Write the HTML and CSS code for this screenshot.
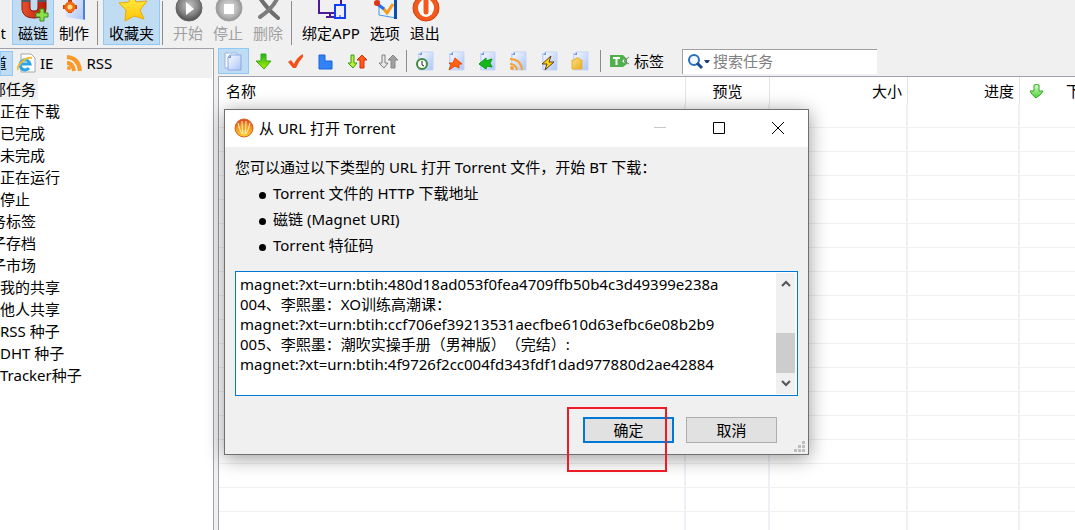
FILE: index.html
```html
<!DOCTYPE html>
<html lang="zh-CN">
<head>
    <meta charset="UTF-8">
    <meta name="viewport" content="width=device-width, initial-scale=1.0">
    <title>BitComet</title>
    <link rel="stylesheet" href="styles.css">
</head>
<body>

    <!-- shared icon parts -->
    <svg class="defs" width="0" height="0">
        <defs>
            <linearGradient id="paper" x1="0" y1="0" x2="1" y2="1">
                <stop offset="0" stop-color="#fafcff"/>
                <stop offset="1" stop-color="#abc4f8"/>
            </linearGradient>
            <linearGradient id="red" x1="0" y1="0" x2="1" y2="0">
                <stop offset="0" stop-color="#e8502c"/>
                <stop offset="1" stop-color="#b41a08"/>
            </linearGradient>
            <linearGradient id="gold" x1="0" y1="0" x2="0" y2="1">
                <stop offset="0" stop-color="#fff45a"/>
                <stop offset="1" stop-color="#ffc400"/>
            </linearGradient>
            <linearGradient id="green" x1="0" y1="0" x2="0" y2="1">
                <stop offset="0" stop-color="#1fb01f"/>
                <stop offset="1" stop-color="#b4f000"/>
            </linearGradient>
            <linearGradient id="mint" x1="0" y1="0" x2="0" y2="1">
                <stop offset="0" stop-color="#e0ffd0"/>
                <stop offset="1" stop-color="#48d030"/>
            </linearGradient>
            <linearGradient id="folder" x1="0" y1="0" x2="1" y2="1">
                <stop offset="0" stop-color="#ffe27a"/>
                <stop offset="1" stop-color="#e6ac28"/>
            </linearGradient>
            <radialGradient id="dark" cx="0.5" cy="0.4" r="0.6">
                <stop offset="0" stop-color="#c4c4c4"/>
                <stop offset="0.6" stop-color="#858585"/>
                <stop offset="1" stop-color="#4c4c4c"/>
            </radialGradient>
            <radialGradient id="light" cx="0.5" cy="0.5" r="0.55">
                <stop offset="0" stop-color="#e0e0e0"/>
                <stop offset="0.6" stop-color="#b8b8b8"/>
                <stop offset="1" stop-color="#888"/>
            </radialGradient>
            <radialGradient id="comet" cx="0.5" cy="0.9" r="0.9">
                <stop offset="0" stop-color="#ffd52a"/>
                <stop offset="0.6" stop-color="#f59a20"/>
                <stop offset="1" stop-color="#d8401c"/>
            </radialGradient>
            <g id="page">
                <path d="M3 2h3v17H3z" fill="#c3d2f6"/>
                <path d="M6 1h12v18H4V3z" fill="url(#paper)" stroke="#c4d4f8"/>
                <path d="M4 4l3-3v3z" fill="#6a92e4"/>
            </g>
        </defs>
    </svg>

    <div class="toolbar">
        <button class="tool cut"><span>打开Torrent</span></button>
        <button class="tool active">
            <svg width="32" height="32" viewBox="0 0 32 32">
                <path d="M5 0v18c0 7 5 10 12 10s12-3 12-10V0h-8v17c0 3-1 4-4 4s-4-1-4-4V0z" fill="url(#red)" stroke="#8c1808"/>
                <path d="M5 5h8v7H5zM21 5h8v7h-8z" fill="#50586c"/>
                <path d="M23 19h4v4h4v4h-4v4h-4v-4h-4v-4h4z" fill="#8ee04c" stroke="#38901c"/>
            </svg>
            <span>磁链</span>
        </button>
        <button class="tool">
            <svg width="32" height="32" viewBox="0 0 32 32">
                <path d="M7 0h20v30L8 27z" fill="url(#paper)"/>
                <path d="M25 0h2v30l-2-1z" fill="#4c7fda"/>
                <path d="M12 10v13M5 17h14" stroke="#c8400c" stroke-width="4"/>
                <circle cx="12" cy="17" r="4" fill="#ffe080" stroke="#f06a18" stroke-width="3"/>
            </svg>
            <span>制作</span>
        </button>
        <i class="sep"></i>
        <button class="tool active">
            <svg width="32" height="32" viewBox="0 0 32 32">
                <path d="M15 1l5 11 11-1-7 9 4 9-10-3-9 5 1-11-7-7 10-1z" fill="url(#gold)" stroke="#eea900" stroke-linejoin="round"/>
            </svg>
            <span>收藏夹</span>
        </button>
        <i class="sep tight"></i>
        <button class="tool" disabled>
            <svg width="32" height="32" viewBox="0 0 32 32">
                <circle cx="17" cy="18" r="13" fill="url(#dark)" stroke="#666"/>
                <path d="M14 12l8 7-8 6z" fill="#fff"/>
            </svg>
            <span>开始</span>
        </button>
        <button class="tool" disabled>
            <svg width="32" height="32" viewBox="0 0 32 32">
                <circle cx="17" cy="18" r="13" fill="url(#light)" stroke="#a0a0a0"/>
                <path d="M12 14h10v10H12z" fill="#fff"/>
            </svg>
            <span>停止</span>
        </button>
        <button class="tool" disabled>
            <svg width="32" height="32" viewBox="0 0 32 32">
                <path d="M8 8q8 12 18 20" fill="none" stroke="#6e6e6e" stroke-width="4" stroke-linecap="round"/>
                <path d="M25 9q-5 10-17 18" fill="none" stroke="#7c7c7c" stroke-width="4" stroke-linecap="round"/>
            </svg>
            <span>删除</span>
        </button>
        <i class="sep"></i>
        <button class="tool">
            <svg width="32" height="32" viewBox="0 0 32 32">
                <path d="M4 6h22v17H4zM15 23v4M11 27h8" fill="none" stroke="#4c1a96" stroke-width="2"/>
                <path d="M20 15h10v13H20z" fill="#f0f0f0" stroke="#1040ff" stroke-width="2"/>
                <path d="M24 26h2" stroke="#1040ff"/>
            </svg>
            <span>绑定APP</span>
        </button>
        <button class="tool">
            <svg width="32" height="32" viewBox="0 0 32 32">
                <path d="M10 3l17 2v23l-17-3z" fill="#eaf4ff" stroke="#4296ee"/>
                <path d="M25 4h3v25h-3z" fill="#104da4"/>
                <path d="M14 18l4 5 6-9" fill="none" stroke="#f79a18" stroke-width="3"/>
                <path d="M7 13l8 6" stroke="#2a6ce8" stroke-width="3"/>
                <circle cx="8" cy="13" r="3" fill="#e83010"/>
            </svg>
            <span>选项</span>
        </button>
        <button class="tool">
            <svg width="32" height="32" viewBox="0 0 32 32">
                <circle cx="17" cy="18" r="13" fill="#f2591c" stroke="#d83c08"/>
                <ellipse cx="17" cy="18" rx="8" ry="9" fill="#fff"/>
                <path d="M17 11v11" stroke="#f2591c" stroke-width="5" stroke-linecap="round"/>
            </svg>
            <span>退出</span>
        </button>
    </div>

    <div class="main">
        <div class="sidebar">
            <div class="tabs">
                <button class="tab cut active"><span>频道</span></button>
                <button class="tab">
                    <svg width="20" height="20" viewBox="0 0 20 20">
                        <path d="M4 1h10l4 4v14H4z" fill="#fff" stroke="#a8a8a8"/>
                        <path d="M4 11h9a5 5 0 1 0-1 4" fill="none" stroke="#2da5e4" stroke-width="3"/>
                        <path d="M1 17C-1 13 9 3 15 5" fill="none" stroke="#f5bd28" stroke-width="2"/>
                    </svg>
                    <span>IE</span>
                </button>
                <button class="tab">
                    <svg width="18" height="18" viewBox="0 0 18 18">
                        <circle cx="4" cy="14" r="2" fill="#f99a28"/>
                        <path d="M2 9q6 0 7 8M2 3q12 1 13 14" fill="none" stroke="#f99a28" stroke-width="4"/>
                    </svg>
                    <span>RSS</span>
                </button>
            </div>
            <ul class="tree">
                <li class="root selected"><span>全部任务</span></li>
                <li>正在下载</li>
                <li>已完成</li>
                <li>未完成</li>
                <li>正在运行</li>
                <li>停止</li>
                <li class="root"><span>任务标签</span></li>
                <li class="root"><span>种子存档</span></li>
                <li class="root"><span>种子市场</span></li>
                <li>我的共享</li>
                <li>他人共享</li>
                <li>RSS 种子</li>
                <li>DHT 种子</li>
                <li>Tracker种子</li>
            </ul>
        </div>

        <div class="content">
            <div class="filters">
                <button class="filter active" aria-label="全部">
                    <svg width="20" height="20" viewBox="0 0 20 20">
                        <path d="M1 2h12v15H1z" fill="#f6f9ff" stroke="#9bb4e4"/>
                        <path d="M6 4h11v15H4V6z" fill="url(#paper)" stroke="#8aa8e6"/>
                        <path d="M4 7l3-3v3z" fill="#7295d8"/>
                    </svg>
                </button>
                <button class="filter" aria-label="下载中">
                    <svg width="20" height="20" viewBox="0 0 20 20">
                        <path d="M6 3h5v7h5l-7 8-8-8h5z" fill="url(#green)" stroke="#38ac10"/>
                    </svg>
                </button>
                <button class="filter" aria-label="已完成">
                    <svg width="20" height="20" viewBox="0 0 20 20">
                        <path d="M2 11l3-2 3 4q3-7 9-10v3q-4 4-7 11H7z" fill="#f4501c"/>
                    </svg>
                </button>
                <button class="filter" aria-label="未完成">
                    <svg width="20" height="20" viewBox="0 0 20 20">
                        <path d="M2 4h6v6h7v8H2z" fill="#3182f4" stroke="#1c62d8"/>
                    </svg>
                </button>
                <button class="filter" aria-label="正在运行">
                    <svg width="20" height="20" viewBox="0 0 20 20">
                        <path d="M3 4h3v8h3l-4 5-5-5h3z" fill="#b9f03c" stroke="#3c9c10"/>
                        <path d="M12 17h4V9h3l-5-5-5 5h3z" fill="#ff5a18" stroke="#d82808"/>
                    </svg>
                </button>
                <button class="filter" aria-label="停止">
                    <svg width="20" height="20" viewBox="0 0 20 20">
                        <path d="M3 4h3v8h3l-4 5-5-5h3z" fill="#e8e8e8" stroke="#808080"/>
                        <path d="M12 17h4V9h3l-5-5-5 5h3z" fill="#a0a0a0" stroke="#888"/>
                    </svg>
                </button>
                <i class="sep"></i>
                <button class="filter" aria-label="最近">
                    <svg width="20" height="20" viewBox="0 0 20 20">
                        <use href="#page"/>
                        <circle cx="7" cy="13" r="5" fill="#fff" stroke="#3c8a3c" stroke-width="2"/>
                        <path d="M7 10v4l2 1" fill="none" stroke="#222"/>
                    </svg>
                </button>
                <button class="filter" aria-label="上传">
                    <svg width="20" height="20" viewBox="0 0 20 20">
                        <use href="#page"/>
                        <path d="M9 7l7 6h-3v4l-4-2-6 4 2-5-2-2h4z" fill="#ff6414" stroke="#e84608"/>
                    </svg>
                </button>
                <button class="filter" aria-label="下载">
                    <svg width="20" height="20" viewBox="0 0 20 20">
                        <use href="#page"/>
                        <path d="M2 13l7-6v3l6-2-2 4 2 4-5-1-1 3z" fill="#14b81c" stroke="#0a9a10"/>
                    </svg>
                </button>
                <button class="filter" aria-label="RSS">
                    <svg width="20" height="20" viewBox="0 0 20 20">
                        <use href="#page"/>
                        <circle cx="4" cy="17" r="2" fill="#f9a030"/>
                        <path d="M2 13q6 0 7 6M2 8q11 0 12 11" fill="none" stroke="#f9a030" stroke-width="2"/>
                    </svg>
                </button>
                <button class="filter" aria-label="加速">
                    <svg width="20" height="20" viewBox="0 0 20 20">
                        <use href="#page"/>
                        <path d="M12 5L3 13h5l-2 6 9-8h-5z" fill="#ffd014" stroke="#604010"/>
                    </svg>
                </button>
                <button class="filter" aria-label="文件夹">
                    <svg width="20" height="20" viewBox="0 0 20 20">
                        <use href="#page"/>
                        <path d="M2 9h3l1-2h3l1 2h2v9H2z" fill="url(#folder)" stroke="#e8b030"/>
                    </svg>
                </button>
                <i class="sep last"></i>
                <button class="tag">
                    <svg width="20" height="14" viewBox="0 0 20 14">
                        <path d="M0 1h13l4 4v5l-4 3H0z" fill="#4fb14c"/>
                        <path d="M3 4h7M6.500 4v7" stroke="#fff" stroke-width="2"/>
                        <circle cx="14" cy="7" r="1.500" fill="#fff"/>
                        <path d="M14 7l5-4M14 7l5 3" stroke="#777"/>
                    </svg>
                    <span>标签</span>
                </button>
                <div class="search">
                    <svg width="24" height="18" viewBox="0 0 24 18">
                        <circle cx="7" cy="8" r="5" fill="#f2f8ff" stroke="#2670bc" stroke-width="2"/>
                        <path d="M10 11l5 5" stroke="#1c4c90" stroke-width="3"/>
                        <path d="M17 8h6l-2 3h-2z" fill="#1c3f78"/>
                    </svg>
                    <input type="text" placeholder="搜索任务" aria-label="搜索任务">
                </div>
            </div>

            <div class="list">
                <table>
                    <colgroup>
                        <col>
                        <col class="c-preview">
                        <col class="c-size">
                        <col class="c-progress">
                        <col class="c-speed">
                    </colgroup>
                    <thead>
                        <tr>
                            <th>名称</th>
                            <th class="center">预览</th>
                            <th class="right">大小</th>
                            <th class="right">进度</th>
                            <th>
                                <div class="speed">
                                    <svg width="18" height="18" viewBox="0 0 18 18">
                                        <path d="M7 3q2-1 5 0v6h4q-1 3-7 7-5-4-6-7h4z" fill="url(#mint)" stroke="#30a828" stroke-linejoin="round"/>
                                    </svg>
                                    <span>下</span>
                                </div>
                            </th>
                        </tr>
                    </thead>
                    <tbody id="rows"></tbody>
                </table>
            </div>
        </div>
    </div>

    <div class="dialog" role="dialog" aria-labelledby="dialog-title">
        <div class="titlebar">
            <svg width="20" height="20" viewBox="0 0 20 20">
                <circle cx="10" cy="10" r="9" fill="url(#comet)" stroke="#d86028"/>
                <path d="M4 5q1 6 4 11M8 3q0 8 1 13M12 3q0 8-1 13M16 5q-1 6-4 11" fill="none" stroke="#fff0c8"/>
            </svg>
            <span id="dialog-title">从 URL 打开 Torrent</span>
            <div class="caption">
                <button disabled aria-label="最小化">
                    <svg width="12" height="12" viewBox="0 0 12 12"><path d="M0 5h12v1H0z" fill="#c8c8c8"/></svg>
                </button>
                <button aria-label="最大化">
                    <svg width="12" height="12" viewBox="0 0 12 12"><path d="M.5.5h11v11H.5z" fill="none" stroke="#000"/></svg>
                </button>
                <button aria-label="关闭">
                    <svg width="12" height="12" viewBox="0 0 12 12"><path d="M0 0l12 12M12 0L0 12" stroke="#000"/></svg>
                </button>
            </div>
        </div>
        <form class="dialog-body">
            <label for="urls">您可以通过以下类型的 URL 打开 Torrent 文件，开始 BT 下载：</label>
            <ul class="types">
                <li>Torrent 文件的 HTTP 下载地址</li>
                <li>磁链 (Magnet URI)</li>
                <li>Torrent 特征码</li>
            </ul>
            <div class="memo">
                <textarea id="urls" spellcheck="false">magnet:?xt=urn:btih:480d18ad053f0fea4709ffb50b4c3d49399e238a
004、李熙墨：XO训练高潮课：
magnet:?xt=urn:btih:ccf706ef39213531aecfbe610d63efbc6e08b2b9
005、李熙墨：潮吹实操手册（男神版）（完结）:
magnet:?xt=urn:btih:4f9726f2cc004fd343fdf1dad977880d2ae42884</textarea>
                <div class="scrollbar">
                    <svg width="10" height="8" viewBox="0 0 10 8"><path d="M1 6l4-4 4 4" fill="none" stroke="#555" stroke-width="2"/></svg>
                    <div class="thumb"></div>
                    <svg width="10" height="8" viewBox="0 0 10 8"><path d="M1 2l4 4 4-4" fill="none" stroke="#555" stroke-width="2"/></svg>
                </div>
            </div>
            <div class="actions">
                <button type="button" class="btn primary">确定</button>
                <button type="button" class="btn">取消</button>
            </div>
        </form>
        <svg class="grip" width="11" height="11" viewBox="0 0 11 11">
            <path d="M8 0h3v3H8zM4 4h3v3H4zM8 4h3v3H8zM0 8h3v3H0zM4 8h3v3H4zM8 8h3v3H8z" fill="#bfbfbf"/>
        </svg>
        <div class="marker"></div>
    </div>

<script>
    // empty grid rows below the header
    const rows = document.getElementById('rows');
    for (let i = 0; i < 40; i++) {
        const row = rows.insertRow();
        for (let c = 0; c < 5; c++) {
            row.insertCell();
        }
    }
</script>
</body>
</html>
```

FILE: styles.css
```css
*{
    box-sizing: border-box;
}
body{
    margin: 0;
    height: 100vh;
    display: flex;
    flex-direction: column;
    overflow: hidden;
    background-color: #f0f0f0;
    color: #000;
    font-family: "Noto Sans", "Noto Sans CJK SC", sans-serif;
    font-size: 15px;
    line-height: 20px;
    text-spacing-trim: space-all;
}
button, input, textarea{
    font: inherit;
    color: inherit;
}
button{
    background: none;
    border: 1px solid transparent;
    padding: 0;
    white-space: nowrap;
}
svg{
    display: block;
    flex: none;
}
.defs{
    position: absolute;
}
.active{
    background-color: #c0dcf3;
    border-color: #90c8f6;
}
.cut{
    display: flex;
    justify-content: flex-end;
    overflow: hidden;
}

/* main toolbar */
.toolbar{
    display: flex;
    align-items: flex-end;
    flex: none;
    height: 45px;
    overflow: hidden;
}
.tool{
    display: flex;
    flex-direction: column;
    align-items: center;
    flex: none;
    padding: 0 5px 1px;
}
.tool svg{
    margin: 0 -1px 1px;
}
.tool:not(.cut):not(.active){
    padding: 0 4px 1px;
}
.tool.cut{
    width: 12px;
    align-items: flex-end;
}
.tool:disabled{
    color: #a0a0a0;
}
.sep{
    flex: none;
    width: 1px;
    height: 44px;
    margin: 0 5px 0 3px;
    background-color: #8c8c8c;
}
.sep.tight{
    margin-left: 2px;
}

.main{
    display: flex;
    flex: 1;
    min-height: 0;
    padding-top: 3px;
}

/* left side */
.sidebar{
    width: 214px;
    flex: none;
    background-color: #fff;
    border-top: 1px solid #a0a0a8;
    border-right: 1px solid #a0a0a8;
    overflow: hidden;
}
.tabs{
    display: flex;
    align-items: center;
    height: 29px;
    padding-bottom: 1px;
    margin-right: 1px;
    background-color: #f0f0f0;
}
.tab{
    display: flex;
    align-items: center;
    gap: 3px;
    padding: 0 4px 0 3px;
    margin-right: 3px;
}
.tab.cut{
    width: 13px;
    height: 25px;
    padding-right: 5px;
    margin-right: 0;
}
.tree{
    list-style: none;
    margin: 0;
    padding: 0;
}
.tree li{
    line-height: 22px;
}
.tree .root{
    display: flex;
    justify-content: flex-end;
    width: 38px;
    padding-right: 2px;
    white-space: nowrap;
}
.tree .selected{
    background-color: #f0f0f0;
}

/* right side */
.content{
    flex: 1;
    min-width: 0;
    display: flex;
    flex-direction: column;
    margin-left: 4px;
}
.filters{
    display: flex;
    align-items: center;
    flex: none;
    height: 28px;
    padding-bottom: 2px;
}
.filter{
    display: flex;
    align-items: center;
    justify-content: center;
    flex: none;
    width: 31px;
    height: 26px;
}
.filters .sep{
    height: 22px;
    margin: 0 2px;
}
.filters .sep.last{
    margin: 0 3px 0 5px;
}
.tag{
    display: flex;
    align-items: center;
    gap: 4px;
    padding: 0 5px;
}
.search{
    display: flex;
    align-items: center;
    flex: none;
    gap: 2px;
    width: 195px;
    height: 25px;
    margin-left: 12px;
    padding-left: 4px;
    padding-bottom: 1px;
    background-color: #fff;
    border-top: 1px solid #a0a0a0;
    border-left: 1px solid #a0a0a0;
}
.search input{
    flex: 1;
    min-width: 0;
    padding: 0;
    border: none;
    outline: none;
    background: none;
}
.search input::placeholder{
    color: #808080;
}
.list{
    flex: 1;
    min-height: 0;
    overflow: hidden;
    background-color: #fff;
    border-top: 1px solid #a0a0a8;
    border-left: 1px solid #a0a0a8;
}
table{
    width: 100%;
    table-layout: fixed;
    border-collapse: separate;
    border-spacing: 0;
}
.c-preview{
    width: 84px;
}
.c-size{
    width: 138px;
}
.c-progress{
    width: 112px;
}
.c-speed{
    width: 55px;
}
th{
    height: 27px;
    padding: 0 5px 0 7px;
    font-weight: normal;
    text-align: left;
    white-space: nowrap;
    overflow: hidden;
    border-right: 1px solid #e5e5e5;
}
th.center{
    padding: 0 7px 0 7px;
    text-align: center;
}
th.right{
    text-align: right;
}
td{
    height: 24px;
    padding: 0;
    border-right: 2px solid #eef0f6;
    border-bottom: 1px solid #f0f0f0;
}
th:last-child, td:last-child{
    border-right: none;
}
.speed{
    display: flex;
    align-items: center;
    gap: 21px;
}

/* "open from URL" window */
.dialog{
    position: absolute;
    left: 224px;
    top: 109px;
    width: 585px;
    background-color: #f0f0f0;
    border: 1px solid #707070;
    box-shadow: 0 3px 18px rgba(0, 0, 0, 0.4);
}
.titlebar{
    display: flex;
    align-items: center;
    gap: 5px;
    height: 37px;
    padding: 0 1px 1px 9px;
    background-color: #fff;
}
.caption{
    display: flex;
    margin-left: auto;
}
.caption button{
    display: flex;
    align-items: center;
    justify-content: center;
    width: 59px;
    height: 36px;
}
.dialog-body{
    padding: 10px 10px 11px;
}
.dialog-body label{
    display: block;
}
.types{
    list-style: none;
    margin: 3px 0 13px;
    padding-left: 24px;
}
.types li{
    display: flex;
    align-items: center;
    gap: 7px;
    line-height: 26px;
}
.types li::before{
    content: "";
    width: 7px;
    height: 7px;
    margin-top: 4px;
    border-radius: 50%;
    background-color: #000;
}
.memo{
    display: flex;
    height: 125px;
    padding: 1px;
    background-color: #fff;
    border: 1px solid #0078d7;
}
.memo textarea{
    flex: 1;
    min-width: 0;
    padding: 1px 3px;
    border: none;
    outline: none;
    resize: none;
    overflow: hidden;
    background: none;
    text-spacing-trim: space-all;
}
.scrollbar{
    display: flex;
    flex-direction: column;
    align-items: center;
    width: 19px;
    padding: 7px 0;
    margin-right: 1px;
    background-color: #f0f0f0;
}
.thumb{
    width: 19px;
    height: 40px;
    margin: auto 0 6px;
    background-color: #cdcdcd;
}
.actions{
    display: flex;
    justify-content: flex-end;
    gap: 12px;
    padding: 21px 21px 0 0;
}
.btn{
    width: 91px;
    height: 26px;
    background-color: #e1e1e1;
    border: 1px solid #adadad;
}
.btn.primary{
    border: 2px solid #0078d7;
}
.grip{
    position: absolute;
    right: 3px;
    bottom: 2px;
}
/* red frame around the OK button */
.marker{
    position: absolute;
    right: 141px;
    bottom: -18px;
    width: 100px;
    height: 65px;
    border: 2px solid #ed1c24;
    pointer-events: none;
}
```
